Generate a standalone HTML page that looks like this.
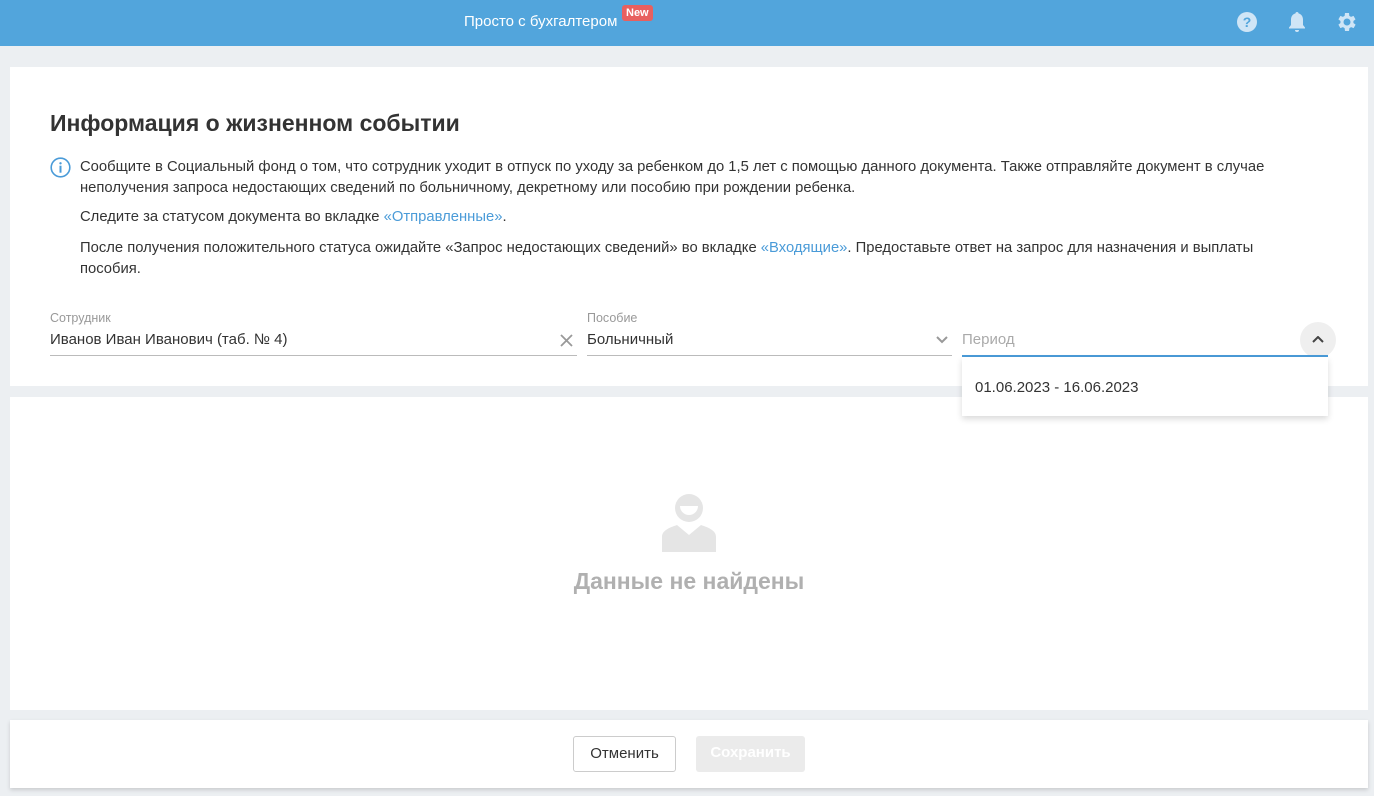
<!DOCTYPE html>
<html><head><meta charset="utf-8"><style>
*{margin:0;padding:0;box-sizing:border-box}
body{width:1374px;height:796px;background:#eceff2;font-family:"Liberation Sans",sans-serif;color:#333;position:relative;overflow:hidden}
.hdr{position:absolute;left:0;top:0;width:1374px;height:46px;background:#52a5dc}
.hdr .t{position:absolute;left:464px;top:13px;color:#fff;font-size:15px}
.new{position:absolute;left:622px;top:5px;background:#e8605f;color:#fff;font-size:11px;font-weight:bold;padding:2px 4px;border-radius:3px}
.card{position:absolute;background:#fff}
h1{position:absolute;left:50px;top:110px;font-size:23px;font-weight:bold;color:#333}
.p{position:absolute;left:80px;font-size:14.8px;line-height:21px;color:#333;width:1225px}
a{color:#4a9bd8;text-decoration:none}
.lbl{position:absolute;font-size:12.5px;color:#999}
.val{position:absolute;font-size:15px;color:#333}
.line{position:absolute;height:1px;background:#bbb}
.btn{position:absolute;height:36px;border-radius:3px;font-size:15px;text-align:center;line-height:34px}
</style></head><body>
<div class="hdr"><div class="t">Просто с бухгалтером</div><div class="new">New</div>
<svg style="position:absolute;left:1236px;top:11px" width="22" height="22" viewBox="0 0 22 22"><circle cx="11" cy="11" r="10" fill="#cfe5f6"/><text x="11" y="16" text-anchor="middle" font-family="Liberation Sans" font-weight="bold" font-size="14" fill="#52a5dc">?</text></svg>
<svg style="position:absolute;left:1287px;top:10px" width="20" height="24" viewBox="0 0 20 24"><path d="M10 2c-1 0-1.5.7-1.5 1.4C5.6 4.2 4 6.7 4 9.5V15l-2 2.5v1h16v-1L16 15V9.5c0-2.8-1.6-5.3-4.5-6.1C11.5 2.7 11 2 10 2z" fill="#cfe5f6"/><path d="M8 20h4a2 2 0 0 1-4 0z" fill="#cfe5f6"/></svg>
<svg style="position:absolute;left:1335px;top:10px" width="24" height="24" viewBox="0 0 24 24"><path fill="#cfe5f6" d="M19.4 13a7.5 7.5 0 0 0 0-2l2.1-1.6-2-3.5-2.5 1a7.4 7.4 0 0 0-1.7-1L15 3h-4l-.4 2.9a7.4 7.4 0 0 0-1.7 1l-2.5-1-2 3.5L6.5 11a7.5 7.5 0 0 0 0 2l-2.1 1.6 2 3.5 2.5-1a7.4 7.4 0 0 0 1.7 1L11 21h4l.4-2.9a7.4 7.4 0 0 0 1.7-1l2.5 1 2-3.5zM13 15.5a3.5 3.5 0 1 1 0-7 3.5 3.5 0 0 1 0 7z" transform="translate(-1 0)"/></svg>
</div>
<div class="card" style="left:10px;top:67px;width:1358px;height:319px"></div>
<h1>Информация о жизненном событии</h1>
<svg style="position:absolute;left:50px;top:157px" width="21" height="21" viewBox="0 0 21 21"><circle cx="10.5" cy="10.5" r="9.3" fill="none" stroke="#4a9bd8" stroke-width="1.6"/><circle cx="10.5" cy="6.3" r="1.2" fill="#4a9bd8"/><rect x="9.5" y="8.7" width="2" height="7" fill="#4a9bd8"/></svg>
<div class="p" style="top:157px">Сообщите в Социальный фонд о том, что сотрудник уходит в отпуск по уходу за ребенком до 1,5 лет с помощью данного документа. Также отправляйте документ в случае неполучения запроса недостающих сведений по больничному, декретному или пособию при рождении ребенка.</div>
<div class="p" style="top:207px">Следите за статусом документа во вкладке <a>«Отправленные»</a>.</div>
<div class="p" style="top:238px">После получения положительного статуса ожидайте «Запрос недостающих сведений» во вкладке <a>«Входящие»</a>. Предоставьте ответ на запрос для назначения и выплаты пособия.</div>
<div class="lbl" style="left:50px;top:311px">Сотрудник</div>
<div class="val" style="left:50px;top:331px">Иванов Иван Иванович (таб. № 4)</div>
<svg style="position:absolute;left:560px;top:334px" width="13" height="13"><path d="M1 1l11 11M12 1L1 12" stroke="#999" stroke-width="1.8"/></svg>
<div class="line" style="left:50px;top:355px;width:527px"></div>
<div class="lbl" style="left:587px;top:311px">Пособие</div>
<div class="val" style="left:587px;top:331px">Больничный</div>
<svg style="position:absolute;left:936px;top:336px" width="12" height="8"><path d="M1 1l5 5 5-5" fill="none" stroke="#999" stroke-width="2"/></svg>
<div class="line" style="left:587px;top:355px;width:365px"></div>
<div class="val" style="left:962px;top:331px;color:#aaa">Период</div>
<div style="position:absolute;left:1300px;top:322px;width:36px;height:36px;border-radius:50%;background:#efefef"></div>
<svg style="position:absolute;left:1312px;top:336px" width="12" height="8"><path d="M1 6l5-5 5 5" fill="none" stroke="#444" stroke-width="2"/></svg>
<div style="position:absolute;left:962px;top:355px;width:366px;height:2px;background:#4a9bd8"></div>
<div class="card" style="left:10px;top:397px;width:1358px;height:313px"></div>
<div style="position:absolute;left:962px;top:357px;width:366px;height:59px;background:#fff;box-shadow:0 3px 6px rgba(0,0,0,.15)"></div>
<div class="val" style="left:975px;top:379px">01.06.2023 - 16.06.2023</div>
<svg style="position:absolute;left:662px;top:492px" width="54" height="60" viewBox="0 0 54 60"><circle cx="27" cy="16" r="14" fill="#e5e5e5"/><path d="M18 14h18a9 9 0 0 1-18 0z" fill="#fff"/><path d="M0 60V45c0-6 6-9 15-12l12 10 12-10c9 3 15 6 15 12v15z" fill="#e5e5e5"/></svg>
<div style="position:absolute;left:0;width:1378px;text-align:center;top:568px;font-size:23px;font-weight:bold;color:#b0b0b0">Данные не найдены</div>
<div class="card" style="left:10px;top:720px;width:1358px;height:68px;box-shadow:0 2px 4px rgba(0,0,0,.15)"></div>
<div class="btn" style="left:573px;top:736px;width:103px;border:1px solid #ccc;background:#fff;color:#333">Отменить</div>
<div class="btn" style="left:696px;top:736px;width:109px;background:#ebebeb;color:#fff;font-weight:bold">Сохранить</div>
</body></html>
